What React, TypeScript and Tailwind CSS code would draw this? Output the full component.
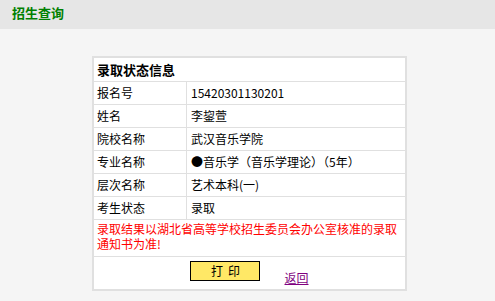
import { FC } from "react";

const rows: [string, string][] = [
    ["报名号", "15420301130201"],
    ["姓名", "李鋆萱"],
    ["院校名称", "武汉音乐学院"],
    ["专业名称", "●音乐学（音乐学理论）（5年）"],
    ["层次名称", "艺术本科(一)"],
    ["考生状态", "录取"],
];

const App: FC = () => {
    return (
        <div className="min-h-[301px] bg-[#f5f5f5] font-['Noto_Sans_CJK_SC',sans-serif] text-black">
            <div className="h-[29px] bg-[#e6e6e6] pl-3">
                <h1 className="text-[13px] font-bold leading-[26px] text-[#008000]">招生查询</h1>
            </div>
            <div className="pl-[92px] pt-[27px]">
                <div className="w-[315px] border-2 border-[#e0e0e0] bg-white text-[12px]">
                    <div className="h-[24px] border-b border-[#e0e0e0] pl-[3px] text-[13px] font-bold leading-[23px]">
                        录取状态信息
                    </div>
                    {rows.map(([label, value]) => (
                        <div key={label} className="grid h-[23px] grid-cols-[93px_1fr] border-b border-[#e0e0e0] leading-[22px]">
                            <div className="border-r border-[#e0e0e0] pl-[3px]">{label}</div>
                            <div className="pl-[4px] whitespace-nowrap">{value}</div>
                        </div>
                    ))}
                    <div className="h-[37px] border-b border-[#e0e0e0] px-[3px] pt-[1px] leading-[15px] text-[#ff0000]">
                        录取结果以湖北省高等学校招生委员会办公室核准的录取通知书为准!
                    </div>
                    <div className="flex h-[32px] justify-center">
                        <button className="mt-[4px] flex h-[20px] w-[70px] items-center justify-center gap-[5px] border border-black bg-[#ffe866] text-[12px] leading-none">
                            <span>打</span>
                            <span>印</span>
                        </button>
                        <a href="#" className="ml-[24px] mt-[13px] leading-[15px] text-[#800080] underline">
                            返回
                        </a>
                    </div>
                </div>
            </div>
        </div>
    );
};

export default App;
